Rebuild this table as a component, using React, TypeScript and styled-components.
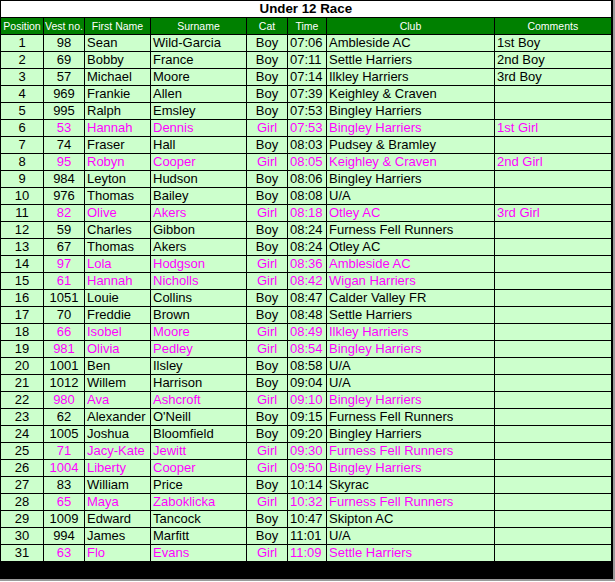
import styled, { createGlobalStyle } from "styled-components";

const GlobalStyle = createGlobalStyle`
    html, body {
        margin: 0;
        padding: 0;
        background: #ffffff;
    }
`;

type Runner = {
    pos: number;
    vest: number;
    first: string;
    surname: string;
    cat: "Boy" | "Girl";
    time: string;
    club: string;
    comment?: string;
};

const runners: Runner[] = [
    { pos: 1, vest: 98, first: "Sean", surname: "Wild-Garcia", cat: "Boy", time: "07:06", club: "Ambleside AC", comment: "1st Boy" },
    { pos: 2, vest: 69, first: "Bobby", surname: "France", cat: "Boy", time: "07:11", club: "Settle Harriers", comment: "2nd Boy" },
    { pos: 3, vest: 57, first: "Michael", surname: "Moore", cat: "Boy", time: "07:14", club: "Ilkley Harriers", comment: "3rd Boy" },
    { pos: 4, vest: 969, first: "Frankie", surname: "Allen", cat: "Boy", time: "07:39", club: "Keighley & Craven" },
    { pos: 5, vest: 995, first: "Ralph", surname: "Emsley", cat: "Boy", time: "07:53", club: "Bingley Harriers" },
    { pos: 6, vest: 53, first: "Hannah", surname: "Dennis", cat: "Girl", time: "07:53", club: "Bingley Harriers", comment: "1st Girl" },
    { pos: 7, vest: 74, first: "Fraser", surname: "Hall", cat: "Boy", time: "08:03", club: "Pudsey & Bramley" },
    { pos: 8, vest: 95, first: "Robyn", surname: "Cooper", cat: "Girl", time: "08:05", club: "Keighley & Craven", comment: "2nd Girl" },
    { pos: 9, vest: 984, first: "Leyton", surname: "Hudson", cat: "Boy", time: "08:06", club: "Bingley Harriers" },
    { pos: 10, vest: 976, first: "Thomas", surname: "Bailey", cat: "Boy", time: "08:08", club: "U/A" },
    { pos: 11, vest: 82, first: "Olive", surname: "Akers", cat: "Girl", time: "08:18", club: "Otley AC", comment: "3rd Girl" },
    { pos: 12, vest: 59, first: "Charles", surname: "Gibbon", cat: "Boy", time: "08:24", club: "Furness Fell Runners" },
    { pos: 13, vest: 67, first: "Thomas", surname: "Akers", cat: "Boy", time: "08:24", club: "Otley AC" },
    { pos: 14, vest: 97, first: "Lola", surname: "Hodgson", cat: "Girl", time: "08:36", club: "Ambleside AC" },
    { pos: 15, vest: 61, first: "Hannah", surname: "Nicholls", cat: "Girl", time: "08:42", club: "Wigan Harriers" },
    { pos: 16, vest: 1051, first: "Louie", surname: "Collins", cat: "Boy", time: "08:47", club: "Calder Valley FR" },
    { pos: 17, vest: 70, first: "Freddie", surname: "Brown", cat: "Boy", time: "08:48", club: "Settle Harriers" },
    { pos: 18, vest: 66, first: "Isobel", surname: "Moore", cat: "Girl", time: "08:49", club: "Ilkley Harriers" },
    { pos: 19, vest: 981, first: "Olivia", surname: "Pedley", cat: "Girl", time: "08:54", club: "Bingley Harriers" },
    { pos: 20, vest: 1001, first: "Ben", surname: "Ilsley", cat: "Boy", time: "08:58", club: "U/A" },
    { pos: 21, vest: 1012, first: "Willem", surname: "Harrison", cat: "Boy", time: "09:04", club: "U/A" },
    { pos: 22, vest: 980, first: "Ava", surname: "Ashcroft", cat: "Girl", time: "09:10", club: "Bingley Harriers" },
    { pos: 23, vest: 62, first: "Alexander", surname: "O'Neill", cat: "Boy", time: "09:15", club: "Furness Fell Runners" },
    { pos: 24, vest: 1005, first: "Joshua", surname: "Bloomfield", cat: "Boy", time: "09:20", club: "Bingley Harriers" },
    { pos: 25, vest: 71, first: "Jacy-Kate", surname: "Jewitt", cat: "Girl", time: "09:30", club: "Furness Fell Runners" },
    { pos: 26, vest: 1004, first: "Liberty", surname: "Cooper", cat: "Girl", time: "09:50", club: "Bingley Harriers" },
    { pos: 27, vest: 83, first: "William", surname: "Price", cat: "Boy", time: "10:14", club: "Skyrac" },
    { pos: 28, vest: 65, first: "Maya", surname: "Zaboklicka", cat: "Girl", time: "10:32", club: "Furness Fell Runners" },
    { pos: 29, vest: 1009, first: "Edward", surname: "Tancock", cat: "Boy", time: "10:47", club: "Skipton AC" },
    { pos: 30, vest: 994, first: "James", surname: "Marfitt", cat: "Boy", time: "11:01", club: "U/A" },
    { pos: 31, vest: 63, first: "Flo", surname: "Evans", cat: "Girl", time: "11:09", club: "Settle Harriers" },
];

const columns = [
    { title: "Position", width: 43 },
    { title: "Vest no.", width: 41 },
    { title: "First Name", width: 66 },
    { title: "Surname", width: 96 },
    { title: "Cat", width: 41 },
    { title: "Time", width: 39 },
    { title: "Club", width: 168 },
    { title: "Comments", width: 117 },
];

const Frame = styled.div`
    display: inline-block;
    border-right: 2px solid #9a9a9a;
    border-bottom: 2px solid #9a9a9a;
`;

const Sheet = styled.table`
    border-collapse: collapse;
    table-layout: fixed;
    width: 612px;
    border: 1px solid #000;
    border-right-width: 2px;
    font-family: "Liberation Sans", Arial, sans-serif;
`;

const TitleCell = styled.td`
    height: 16px;
    padding: 0;
    border: 1px solid #000;
    background: #fff;
    text-align: center;
    font-weight: bold;
    font-size: 13.33px;
    line-height: 16px;
    color: #000;
`;

const HeadCell = styled.td`
    height: 16px;
    padding: 0;
    border: 1px solid #000;
    background: #008000;
    color: #fff;
    text-align: center;
    font-size: 10.5px;
    line-height: 16px;
    white-space: nowrap;
    overflow: hidden;
`;

const Cell = styled.td<{ $girl: boolean; $align?: "left" | "center" }>`
    height: 16px;
    padding: 0 0 0 ${({ $align }) => ($align === "center" ? "0" : "2px")};
    border: 1px solid #000;
    background: #ccffcc;
    color: ${({ $girl }) => ($girl ? "#ff00ff" : "#000")};
    text-align: ${({ $align }) => $align ?? "left"};
    font-size: 13px;
    line-height: 16px;
    white-space: nowrap;
    overflow: hidden;
`;

const FootCell = styled.td`
    height: 16px;
    padding: 0;
    border: 1px solid #000;
    background: #000;
`;

const App = () => {
    return (
        <>
            <GlobalStyle />
            <Frame>
                <Sheet>
                    <colgroup>
                        {columns.map((c) => (
                            <col key={c.title} style={{ width: c.width }} />
                        ))}
                    </colgroup>
                    <tbody>
                        <tr>
                            <TitleCell colSpan={8}>Under 12 Race</TitleCell>
                        </tr>
                        <tr>
                            {columns.map((c) => (
                                <HeadCell key={c.title}>{c.title}</HeadCell>
                            ))}
                        </tr>
                        {runners.map((r) => {
                            const girl = r.cat === "Girl";
                            return (
                                <tr key={r.pos}>
                                    <Cell $girl={false} $align="center">{r.pos}</Cell>
                                    <Cell $girl={girl} $align="center">{r.vest}</Cell>
                                    <Cell $girl={girl}>{r.first}</Cell>
                                    <Cell $girl={girl}>{r.surname}</Cell>
                                    <Cell $girl={girl} $align="center">{r.cat}</Cell>
                                    <Cell $girl={girl}>{r.time}</Cell>
                                    <Cell $girl={girl}>{r.club}</Cell>
                                    <Cell $girl={girl}>{r.comment ?? ""}</Cell>
                                </tr>
                            );
                        })}
                        <tr>
                            <FootCell colSpan={8} />
                        </tr>
                    </tbody>
                </Sheet>
            </Frame>
        </>
    );
};

export default App;
